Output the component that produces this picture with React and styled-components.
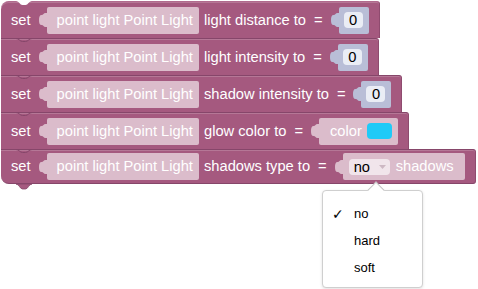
import React from 'react';
import styled, { createGlobalStyle } from 'styled-components';

const GlobalStyle = createGlobalStyle`
    body {
        margin: 0;
        background: #fff;
        font-family: "Liberation Sans", Arial, sans-serif;
    }
`;

const BLOCK = '#a5597f';
const EDGE = '#86466a';
const PINK = '#dbbccb';
const BLUE = '#b9bed7';

const Workspace = styled.div`
    position: relative;
    width: 478px;
    height: 289px;
    padding: 1px 0 0 1px;
    box-sizing: border-box;
    overflow: hidden;
`;

const Stack = styled.div`
    display: flex;
    flex-direction: column;
    align-items: flex-start;
`;

const Block = styled.div`
    position: relative;
    display: flex;
    align-items: center;
    gap: 8px;
    box-sizing: border-box;
    height: ${p => p.$last ? '35px' : '37px'};
    padding: 0 10px;
    background: ${BLOCK};
    border-top: 1px solid ${p => p.$first ? '#b06a8d' : EDGE};
    border-right: 1px solid #8f4b6f;
    border-bottom: ${p => p.$last ? `1px solid ${EDGE}` : 'none'};
    border-radius: ${p => p.$first ? '8px 3px 0 0' : p.$last ? '0 3px 3px 8px' : '0 3px 0 0'};
    box-shadow: inset 0 1px 0 rgba(255, 255, 255, 0.18);
`;

const Notch = styled.svg`
    position: absolute;
    left: 15px;
    top: -1px;
`;

const Tab = styled.svg`
    position: absolute;
    left: 15px;
    bottom: -7px;
`;

const Label = styled.span`
    color: #fff;
    font-size: 14.7px;
    line-height: 1;
    white-space: nowrap;
    margin-left: ${p => p.$tight ? '-3px' : '0'};
`;

const Slot = styled.div`
    display: flex;
    align-items: center;
`;

const Shell = styled.div`
    display: flex;
    align-items: center;
    gap: ${p => p.$gap || 0}px;
    box-sizing: border-box;
    height: 27px;
    padding: 0 ${p => p.$pr}px 0 ${p => p.$pl}px;
    background: ${p => p.$color};
    border-radius: 2px;
`;

const NumberField = styled.span`
    display: flex;
    align-items: center;
    justify-content: center;
    width: 19px;
    height: 16px;
    border-radius: 4px;
    background: #eaedf5;
    color: #000;
    font-size: 14.7px;
`;

const Swatch = styled.span`
    width: 25px;
    height: 16px;
    border-radius: 4px;
    background: #1fcaf7;
`;

const DropField = styled.span`
    display: flex;
    align-items: center;
    gap: 9px;
    box-sizing: border-box;
    width: 41px;
    height: 16px;
    padding-left: 5px;
    border-radius: 4px;
    background: rgba(255, 255, 255, 0.62);
    color: #000;
    font-size: 14.7px;
`;

const Menu = styled.div`
    position: absolute;
    left: 322px;
    top: 190px;
    width: 101px;
    height: 98px;
    box-sizing: border-box;
    padding-top: 9px;
    background: #fff;
    border: 1px solid #cfcfcf;
    border-radius: 4px;
    box-shadow: 0 1px 3px rgba(0, 0, 0, 0.12);
`;

const Arrow = styled.span`
    position: absolute;
    left: 47px;
    top: -7px;
    width: 11px;
    height: 11px;
    background: #fff;
    border-top: 1px solid #c4c4c4;
    border-left: 1px solid #c4c4c4;
    transform: rotate(45deg);
`;

const MenuItem = styled.div`
    display: flex;
    align-items: center;
    height: 27px;
    font-size: 13px;
    color: #000;
`;

const Check = styled.span`
    width: 31px;
    padding-left: 9px;
    box-sizing: border-box;
    font-family: "DejaVu Sans", sans-serif;
    font-size: 14px;
`;

const TabShape = ({ color }) => (
    <svg width="8" height="14" viewBox="0 0 8 14">
        <path d="M8 0 V14 H6.5 C4.5 14 4.5 12 2.6 12 C0.6 12 0 10 0 7 C0 4 0.6 2 2.6 2 C4.5 2 4.5 0 6.5 0 Z" fill={color} />
    </svg>
);

const Input = ({ color, pl, pr, gap, children }) => (
    <Slot>
        <TabShape color={color} />
        <Shell $color={color} $pl={pl} $pr={pr} $gap={gap}>{children}</Shell>
    </Slot>
);

const Light = () => (
    <Input color={PINK} pl={10} pr={6}>
        <Label>point light Point Light</Label>
    </Input>
);

const NumberInput = () => (
    <Input color={BLUE} pl={5} pr={6}>
        <NumberField>0</NumberField>
    </Input>
);

const rows = [
    { text: 'light distance to', value: <NumberInput /> },
    { text: 'light intensity to', value: <NumberInput /> },
    { text: 'shadow intensity to', value: <NumberInput /> },
    {
        text: 'glow color to',
        value: (
            <Input color={PINK} pl={11} pr={6} gap={5}>
                <Label>color</Label>
                <Swatch />
            </Input>
        ),
    },
    {
        text: 'shadows type to',
        value: (
            <Input color={PINK} pl={6} pr={11} gap={6}>
                <DropField>
                    no
                    <svg width="7" height="4" viewBox="0 0 7 4"><path d="M0 0 H7 L3.5 4 Z" fill="#cdb8c3" /></svg>
                </DropField>
                <Label>shadows</Label>
            </Input>
        ),
    },
];

const App = () => (
    <Workspace>
        <GlobalStyle />
        <Stack>
            {rows.map((row, i) => (
                <Block key={row.text} $first={i === 0} $last={i === rows.length - 1}>
                    <Notch width="16" height="5" viewBox="0 0 16 5">
                        {i === 0 ? (
                            <path d="M0 0 C3 0 4 4 6.5 4 H9.5 C12 4 13 0 16 0 Z" fill="#fff" />
                        ) : (
                            <path d="M0 0.5 C3 0.5 4 3.5 6.5 3.5 H9.5 C12 3.5 13 0.5 16 0.5" fill="none" stroke={EDGE} />
                        )}
                    </Notch>
                    <Label>set</Label>
                    <Light />
                    <Label $tight>{row.text}</Label>
                    <Label>=</Label>
                    {row.value}
                    {i === rows.length - 1 && (
                        <Tab width="16" height="6" viewBox="0 0 16 6">
                            <path d="M0 0 C3 0 4 5 6.5 5 H9.5 C12 5 13 0 16 0 Z" fill={BLOCK} stroke={EDGE} strokeWidth="0.8" />
                        </Tab>
                    )}
                </Block>
            ))}
        </Stack>
        <Menu>
            <Arrow />
            <MenuItem><Check>✓</Check>no</MenuItem>
            <MenuItem><Check />hard</MenuItem>
            <MenuItem><Check />soft</MenuItem>
        </Menu>
    </Workspace>
);

export default App;
